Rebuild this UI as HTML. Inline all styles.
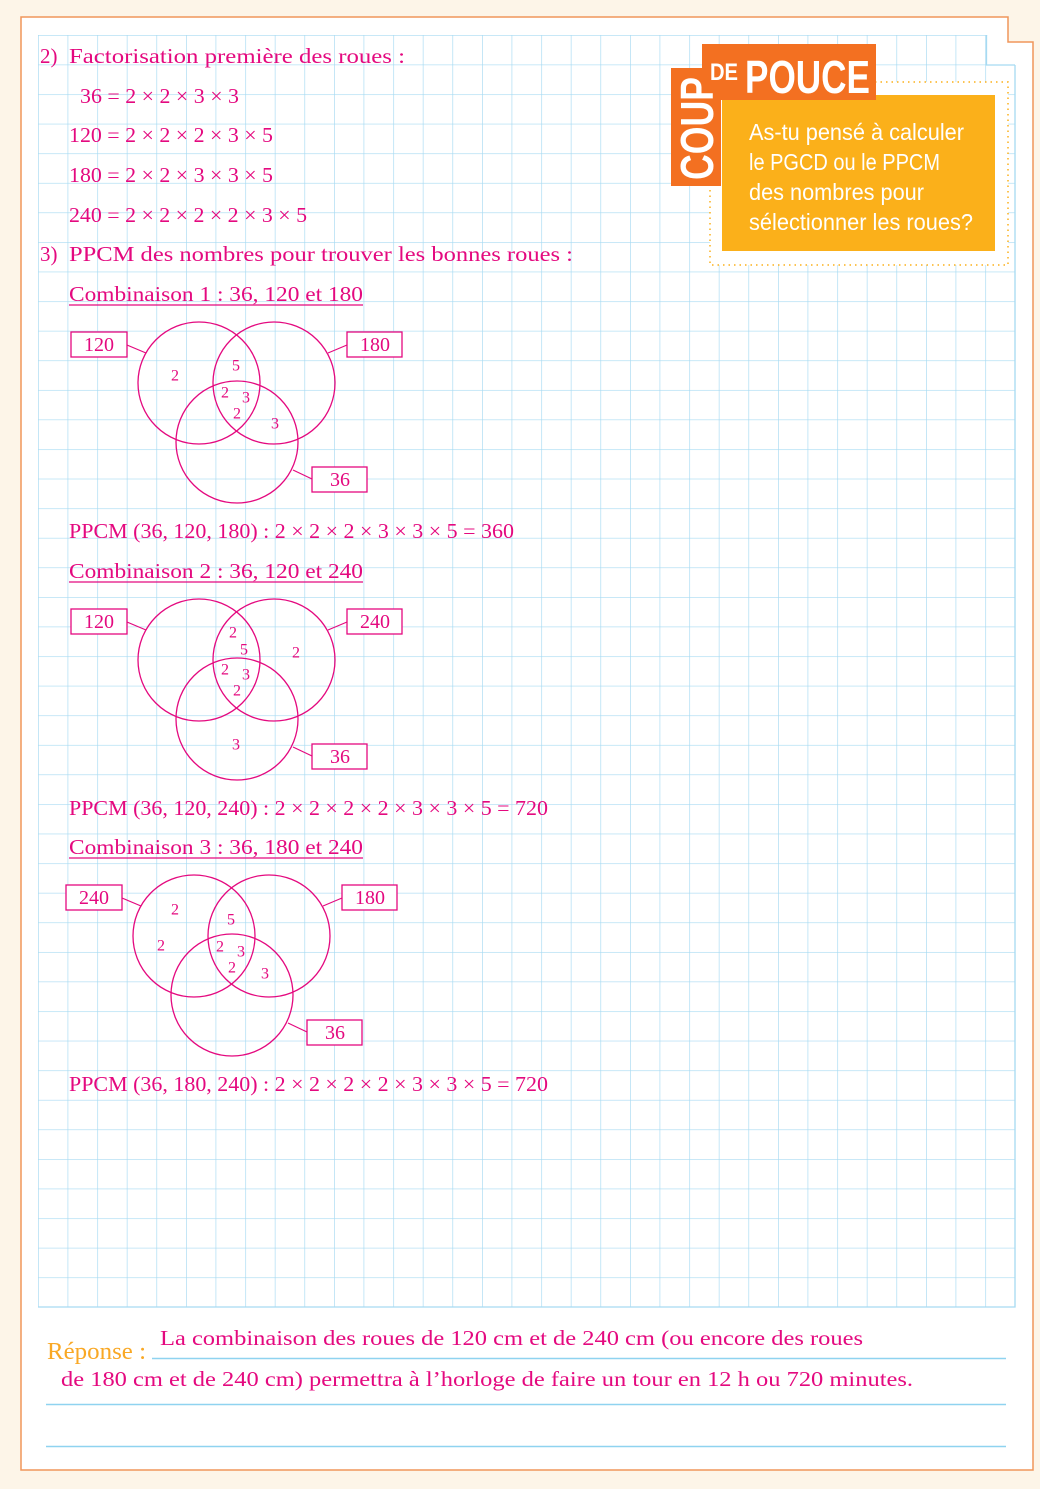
<!DOCTYPE html>
<html><head><meta charset="utf-8"><style>
html,body{margin:0;padding:0;background:#fdf5e8;}
svg{display:block}
.t{font-family:"Liberation Serif",serif;font-size:21px;fill:#e4097f}
.n{font-family:"Liberation Serif",serif;font-size:16px;fill:#e4097f;text-anchor:middle;dominant-baseline:central}
.c{fill:none;stroke:#e4097f;stroke-width:1.3}
.b{fill:#fff;stroke:#e4097f;stroke-width:1.3}
.bl{font-family:"Liberation Serif",serif;font-size:20px;fill:#e4097f;text-anchor:middle;dominant-baseline:central}
.w{font-family:"Liberation Sans Narrow","Liberation Sans",sans-serif;font-size:23px;fill:#fff}
</style></head><body>
<svg width="1040" height="1489" viewBox="0 0 1040 1489" xmlns="http://www.w3.org/2000/svg">
<path d="M21 17 H1008 V42 H1033 V1470 H21 Z" fill="#fff"/>
<defs>
<pattern id="g" x="38" y="35" width="29.6" height="29.58" patternUnits="userSpaceOnUse">
<path d="M0 0 H29.6 M0 0 V29.58" stroke="#a6daf2" stroke-width="1.3" fill="none"/>
</pattern>
</defs>
<rect x="38" y="35" width="977" height="1272" fill="url(#g)"/>
<path d="M1015 65 V1307 H38" stroke="#a6daf2" stroke-width="1.3" fill="none"/>
<rect x="987.2" y="34" width="30" height="30.3" fill="#fff"/>
<rect x="1008.7" y="30" width="12" height="11.3" fill="#fdf5e8"/>
<path d="M986.5 35 V65 H1015" stroke="#a6daf2" stroke-width="1.3" fill="none"/>
<path d="M21 17 H1008 V42 H1033 V1470 H21 Z" fill="none" stroke="#f0965a" stroke-width="1.5"/>

<!-- Coup de pouce -->
<rect x="710" y="82" width="298" height="183" fill="#fff" stroke="#fbb01a" stroke-width="1.5" stroke-dasharray="1.5 4"/>
<rect x="722" y="95" width="273" height="156" fill="#fbb01a"/>
<rect x="702" y="44" width="174" height="56" fill="#f37021"/>
<rect x="671" y="68" width="50" height="118" fill="#f37021"/>
<text x="710" y="80" font-family="Liberation Sans Narrow,Liberation Sans,sans-serif" font-weight="bold" font-size="24" fill="#fff" textLength="28" lengthAdjust="spacingAndGlyphs">DE</text>
<text x="745" y="93" font-family="Liberation Sans Narrow,Liberation Sans,sans-serif" font-weight="bold" font-size="46" fill="#fff" textLength="125" lengthAdjust="spacingAndGlyphs">POUCE</text>
<text transform="translate(713,180) rotate(-90)" font-family="Liberation Sans Narrow,Liberation Sans,sans-serif" font-weight="bold" font-size="46" fill="#fff" textLength="103" lengthAdjust="spacingAndGlyphs">COUP</text>
<text class="w" x="749" y="140" textLength="215" lengthAdjust="spacingAndGlyphs">As-tu pensé à calculer</text>
<text class="w" x="749" y="170" textLength="191" lengthAdjust="spacingAndGlyphs">le PGCD ou le PPCM</text>
<text class="w" x="749" y="200" textLength="175" lengthAdjust="spacingAndGlyphs">des nombres pour</text>
<text class="w" x="749" y="230" textLength="224" lengthAdjust="spacingAndGlyphs">sélectionner les roues?</text>

<!-- text -->
<text class="t" x="40" y="63">2)</text>
<text class="t" x="69" y="63" textLength="336" lengthAdjust="spacingAndGlyphs">Factorisation première des roues :</text>
<text class="t" x="80" y="103" textLength="159" lengthAdjust="spacingAndGlyphs">36 = 2 × 2 × 3 × 3</text>
<text class="t" x="69" y="142" textLength="204" lengthAdjust="spacingAndGlyphs">120 = 2 × 2 × 2 × 3 × 5</text>
<text class="t" x="69" y="182" textLength="204" lengthAdjust="spacingAndGlyphs">180 = 2 × 2 × 3 × 3 × 5</text>
<text class="t" x="69" y="222" textLength="238" lengthAdjust="spacingAndGlyphs">240 = 2 × 2 × 2 × 2 × 3 × 5</text>
<text class="t" x="40" y="261">3)</text>
<text class="t" x="69" y="261" textLength="504" lengthAdjust="spacingAndGlyphs">PPCM des nombres pour trouver les bonnes roues :</text>

<text class="t" x="69" y="301" textLength="294" lengthAdjust="spacingAndGlyphs">Combinaison 1 : 36, 120 et 180</text>
<line x1="69" y1="305" x2="363" y2="305" stroke="#e4097f" stroke-width="1.3"/>
<text class="t" x="69" y="538" textLength="445" lengthAdjust="spacingAndGlyphs">PPCM (36, 120, 180) : 2 × 2 × 2 × 3 × 3 × 5 = 360</text>
<text class="t" x="69" y="578" textLength="294" lengthAdjust="spacingAndGlyphs">Combinaison 2 : 36, 120 et 240</text>
<line x1="69" y1="582" x2="363" y2="582" stroke="#e4097f" stroke-width="1.3"/>
<text class="t" x="69" y="815" textLength="479" lengthAdjust="spacingAndGlyphs">PPCM (36, 120, 240) : 2 × 2 × 2 × 2 × 3 × 3 × 5 = 720</text>
<text class="t" x="69" y="854" textLength="294" lengthAdjust="spacingAndGlyphs">Combinaison 3 : 36, 180 et 240</text>
<line x1="69" y1="858" x2="363" y2="858" stroke="#e4097f" stroke-width="1.3"/>
<text class="t" x="69" y="1091" textLength="479" lengthAdjust="spacingAndGlyphs">PPCM (36, 180, 240) : 2 × 2 × 2 × 2 × 3 × 3 × 5 = 720</text>

<!-- Venn 1 -->
<g>
<line x1="127" y1="345" x2="146" y2="353" stroke="#e4097f" stroke-width="1.2"/>
<line x1="347" y1="345" x2="328" y2="353" stroke="#e4097f" stroke-width="1.2"/>
<line x1="293" y1="470" x2="312" y2="479" stroke="#e4097f" stroke-width="1.2"/>
<circle class="c" cx="199" cy="383" r="61"/><circle class="c" cx="274" cy="383" r="61"/><circle class="c" cx="237" cy="442" r="61"/>
<rect class="b" x="71" y="332" width="56" height="25"/><text class="bl" x="99" y="345">120</text>
<rect class="b" x="347" y="332" width="55" height="25"/><text class="bl" x="375" y="345">180</text>
<rect class="b" x="312" y="467" width="55" height="25"/><text class="bl" x="340" y="480">36</text>
<text class="n" x="175" y="376">2</text><text class="n" x="236" y="366">5</text><text class="n" x="225" y="393">2</text><text class="n" x="246" y="398">3</text><text class="n" x="237" y="414">2</text><text class="n" x="275" y="424">3</text>
</g>
<!-- Venn 2 -->
<g transform="translate(0,277)">
<line x1="127" y1="345" x2="146" y2="353" stroke="#e4097f" stroke-width="1.2"/>
<line x1="347" y1="345" x2="328" y2="353" stroke="#e4097f" stroke-width="1.2"/>
<line x1="293" y1="470" x2="312" y2="479" stroke="#e4097f" stroke-width="1.2"/>
<circle class="c" cx="199" cy="383" r="61"/><circle class="c" cx="274" cy="383" r="61"/><circle class="c" cx="237" cy="442" r="61"/>
<rect class="b" x="71" y="332" width="56" height="25"/><text class="bl" x="99" y="345">120</text>
<rect class="b" x="347" y="332" width="55" height="25"/><text class="bl" x="375" y="345">240</text>
<rect class="b" x="312" y="467" width="55" height="25"/><text class="bl" x="340" y="480">36</text>
<text class="n" x="233" y="356">2</text><text class="n" x="244" y="373">5</text><text class="n" x="296" y="376">2</text><text class="n" x="225" y="393">2</text><text class="n" x="246" y="398">3</text><text class="n" x="237" y="414">2</text><text class="n" x="236" y="468">3</text>
</g>
<!-- Venn 3 -->
<g transform="translate(-5,553)">
<line x1="127" y1="345" x2="146" y2="353" stroke="#e4097f" stroke-width="1.2"/>
<line x1="347" y1="345" x2="328" y2="353" stroke="#e4097f" stroke-width="1.2"/>
<line x1="293" y1="470" x2="312" y2="479" stroke="#e4097f" stroke-width="1.2"/>
<circle class="c" cx="199" cy="383" r="61"/><circle class="c" cx="274" cy="383" r="61"/><circle class="c" cx="237" cy="442" r="61"/>
<rect class="b" x="71" y="332" width="56" height="25"/><text class="bl" x="99" y="345">240</text>
<rect class="b" x="347" y="332" width="55" height="25"/><text class="bl" x="375" y="345">180</text>
<rect class="b" x="312" y="467" width="55" height="25"/><text class="bl" x="340" y="480">36</text>
<text class="n" x="180" y="357">2</text><text class="n" x="236" y="367">5</text><text class="n" x="166" y="393">2</text><text class="n" x="225" y="394">2</text><text class="n" x="246" y="399">3</text><text class="n" x="237" y="415">2</text><text class="n" x="270" y="421">3</text>
</g>

<!-- Réponse -->
<text x="47" y="1359" font-family="Liberation Sans Narrow,Liberation Serif,serif" font-size="24" fill="#f9a825" textLength="99" lengthAdjust="spacingAndGlyphs">Réponse :</text>
<line x1="152" y1="1358.5" x2="1006" y2="1358.5" stroke="#8fd3f0" stroke-width="1.5"/>
<line x1="46" y1="1404.5" x2="1006" y2="1404.5" stroke="#8fd3f0" stroke-width="1.5"/>
<line x1="46" y1="1446.5" x2="1006" y2="1446.5" stroke="#8fd3f0" stroke-width="1.5"/>
<text class="t" x="160" y="1345" textLength="703" lengthAdjust="spacingAndGlyphs">La combinaison des roues de 120 cm et de 240 cm (ou encore des roues</text>
<text class="t" x="61" y="1386" textLength="852" lengthAdjust="spacingAndGlyphs">de 180 cm et de 240 cm) permettra à l’horloge de faire un tour en 12 h ou 720 minutes.</text>
</svg>
</body></html>
